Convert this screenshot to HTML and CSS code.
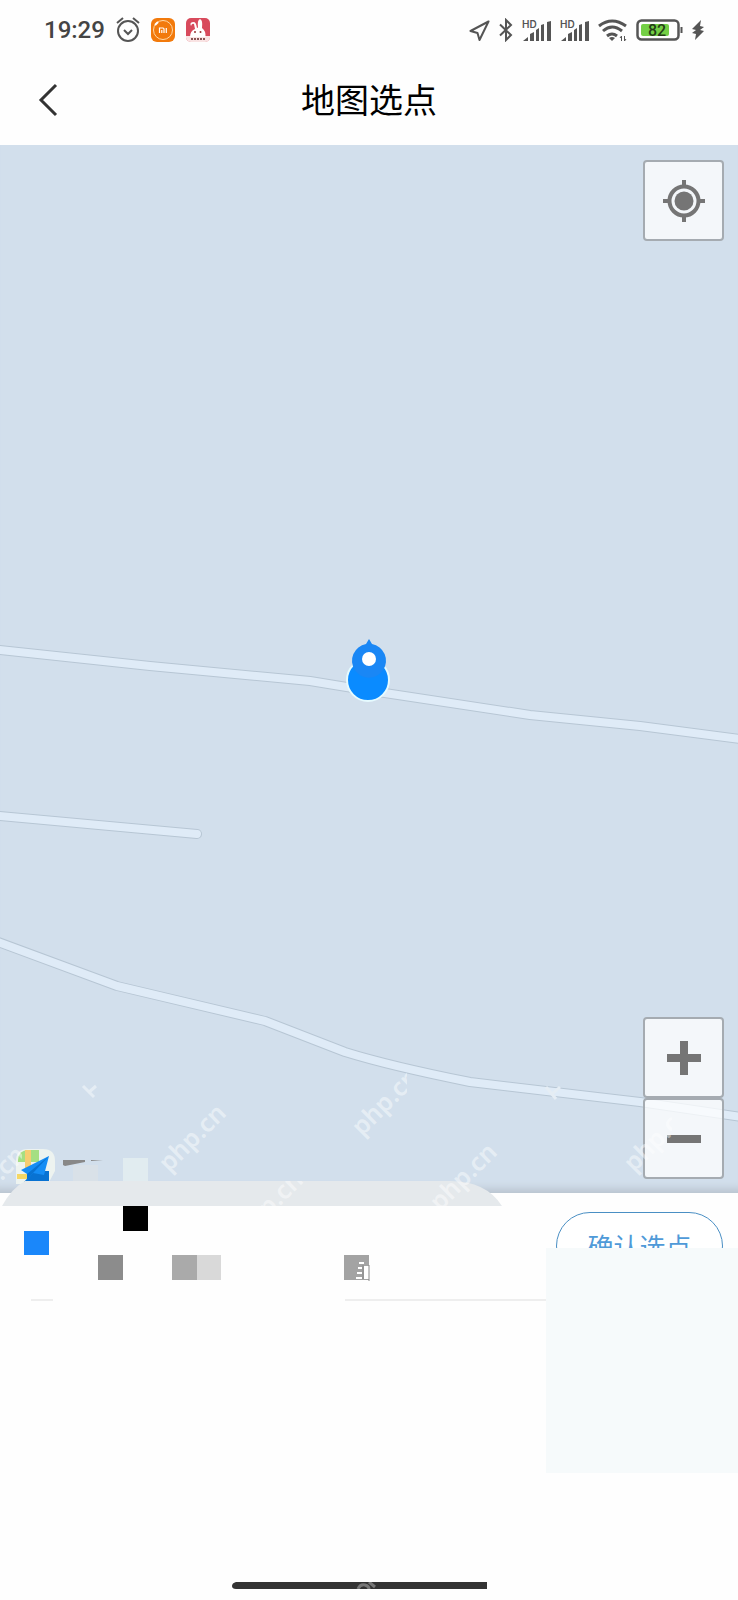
FILE: index.html
```html
<!DOCTYPE html>
<html lang="zh-CN">
<head>
    <meta charset="UTF-8">
    <meta name="viewport" content="width=device-width, initial-scale=1.0">
    <link rel="stylesheet" href="styles.css">
    <title>地图选点</title>
</head>
<body>
    <!-- Status bar -->
    <div class="status">
        <div class="status-left">
            <span class="time">19:29</span>
            <svg width="24" height="26" viewBox="0 0 24 26" fill="none" stroke="#555" stroke-width="2">
                <circle cx="12" cy="14" r="10"/>
                <path d="M8 13l4 4 4-4M1 6l6-5M23 6l-6-5"/>
            </svg>
            <svg width="24" height="24" viewBox="0 0 24 24">
                <rect width="24" height="24" rx="6" fill="#f27a0c"/>
                <circle cx="12" cy="12" r="9.5" fill="none" stroke="#ffd9a8"/>
                <path d="M4 7l3-3" stroke="#fff" stroke-width="2"/>
                <path d="M8.500 15v-5h3.500q1 0 1 1v4M10.800 12v3M15.300 10v5" fill="none" stroke="#fff" stroke-width="1.200"/>
            </svg>
            <svg width="24" height="24" viewBox="0 0 24 24">
                <rect width="24" height="24" rx="5" fill="#d84a5c"/>
                <path d="M0 18h24v2q-1 4-5 4H5q-4 0-5-4z" fill="#f9e3e3"/>
                <path d="M4 19q0-6 5-8L8 6Q6 5 5 8q-2-4 3-4 2 0 3 6l1-.5Q11 2 14 1q3 1 2 9 4 3 3.500 9z" fill="#fff"/>
                <circle cx="9" cy="14" r="1" fill="#933"/>
                <circle cx="14.500" cy="14" r="1" fill="#933"/>
                <path d="M5 21h14" stroke="#855" stroke-width="2" stroke-dasharray="2 1"/>
            </svg>
        </div>
        <div class="status-right">
            <svg width="21" height="21" viewBox="0 0 21 21" fill="none" stroke="#555" stroke-width="2" stroke-linejoin="round">
                <path d="M19.500 1.500L1.500 11l7 2 2 7z"/>
            </svg>
            <svg width="14" height="24" viewBox="0 0 14 24" fill="none" stroke="#555" stroke-width="2">
                <path d="M1 6.500l11 10.500-5 5V2l5 5L1 17.500"/>
            </svg>
            <svg width="29" height="24" viewBox="0 0 29 24" fill="#555">
                <text x="0" y="10" class="hd">HD</text>
                <path d="M1 23l5-4v4zM8 16l4-2v9H8zM14 12l3-2v13h-3zM19 7l3-1v17h-3zM25 4l4-1v20h-4z"/>
            </svg>
            <svg width="29" height="24" viewBox="0 0 29 24" fill="#555">
                <text x="0" y="10" class="hd">HD</text>
                <path d="M1 23l5-4v4zM8 16l4-2v9H8zM14 12l3-2v13h-3zM19 7l3-1v17h-3zM25 4l4-1v20h-4z"/>
            </svg>
            <svg width="29" height="24" viewBox="0 0 29 24" fill="none" stroke="#555" stroke-width="3">
                <path d="M1 8Q14-2 28 8M5 13q9-8 19 0M9 18q5-4 10 0"/>
                <path d="M11 20q3-2 6 0l-3 3z" fill="#555" stroke="none"/>
                <path d="M23.500 23v-5l-1.500 2M26.500 18v5l1.500-2" stroke-width="1"/>
            </svg>
            <svg width="47" height="22" viewBox="0 0 47 22">
                <rect x="1.500" y="1.500" width="41" height="19" rx="4" fill="none" stroke="#555" stroke-width="2.500"/>
                <rect x="5" y="5" width="28" height="12" rx="2" fill="#74cf45"/>
                <text x="12" y="17" class="level">82</text>
                <path d="M45.500 8v6" stroke="#555" stroke-width="2"/>
            </svg>
            <svg width="12" height="22" viewBox="0 0 12 22" fill="#555">
                <path d="M9 1L0 10l4 1-4 3 4 1-1 6 9-9-4-1 4-3-4-1z"/>
            </svg>
        </div>
    </div>

    <header class="header">
        <button class="back" aria-label="返回">
            <svg width="20" height="34" viewBox="0 0 20 34" fill="none" stroke="#333" stroke-width="3">
                <path d="M18 2L3 17l15 15"/>
            </svg>
        </button>
        <h1>地图选点</h1>
    </header>

    <!-- Map with roads, watermark and the selected point -->
    <main class="map">
        <svg class="roads" viewBox="0 0 738 1048" preserveAspectRatio="xMidYMax slice">
            <g class="road-edge">
                <path d="M-10 504L150 521 310 536 365 545 530 570 640 581 748 595"/>
                <path d="M-10 670L197 689"/>
                <path d="M-10 794L117 841 265 876 345 907Q390 921 470 937L640 957 748 973"/>
            </g>
            <g class="road">
                <path d="M-10 504L150 521 310 536 365 545 530 570 640 581 748 595"/>
                <path d="M-10 670L197 689"/>
                <path d="M-10 794L117 841 265 876 345 907Q390 921 470 937L640 957 748 973"/>
            </g>
            <g class="pin">
                <circle cx="368" cy="535" r="21" fill="#0a8bff" stroke="#e6fbff" stroke-width="2"/>
                <path d="M369 494l3 5a17 17 0 1 1-6 0z"/>
                <circle cx="369" cy="514" r="7" fill="#fff"/>
            </g>
        </svg>
        <svg class="provider" width="150" height="36" viewBox="0 0 150 36">
            <path d="M0 36V13Q0 1 12 1h15q12 0 12 12v10l-7 13z" fill="#edf3f0"/>
            <path d="M2 12q1-10 10-10h11v12H2z" fill="#a5df82"/>
            <path d="M9 2h6v21H9z" fill="#f6cd72"/>
            <path d="M1 26h11v5H1z" fill="#f5d765"/>
            <path d="M8 34l10-11h15v11z" fill="#0872d2"/>
            <path d="M33 8L5 22l6 4v6l6-7 11 2z" fill="#158df5"/>
            <path d="M33 8L11 26v6l6-7z" fill="#0872d2"/>
            <path d="M57 17h25v19H57z" fill="#d9e1e8"/>
            <path d="M47 12h22v2l-20 4-2-1zM75 12h12l-12 1z" fill="#888"/>
            <path d="M107 10h25v26h-25z" fill="#e1ecf0"/>
        </svg>
        <button class="tool locate" aria-label="定位">
            <svg width="42" height="42" viewBox="0 0 42 42" fill="none" stroke="#757575" stroke-width="4">
                <circle cx="21" cy="21" r="14.500"/>
                <circle cx="21" cy="21" r="9.500" fill="#757575" stroke="none"/>
                <path d="M21 0v7M21 35v7M0 21h7M35 21h7"/>
            </svg>
        </button>
        <div class="zoom">
            <button class="tool" aria-label="放大">
                <svg width="34" height="34" viewBox="0 0 34 34" stroke="#757575" stroke-width="8"><path d="M17 0v34M0 17h34"/></svg>
            </button>
            <button class="tool" aria-label="缩小">
                <svg width="34" height="34" viewBox="0 0 34 34" stroke="#757575" stroke-width="8"><path d="M0 17h34"/></svg>
            </button>
        </div>
        <svg class="marks" viewBox="0 0 738 100" preserveAspectRatio="xMidYMax meet">
            <defs>
                <clipPath id="cutRight"><path d="M340-50h67v120h-67z"/></clipPath>
                <clipPath id="cutCorner"><path d="M0 40h22v60H0z"/></clipPath>
                <clipPath id="cutZoom"><path d="M610 0h62v90h-62z"/></clipPath>
            </defs>
            <text class="mark" transform="translate(169 80) rotate(-45)">php.cn</text>
            <g clip-path="url(#cutRight)"><text class="mark" transform="translate(362 44) rotate(-45)">php.cn</text></g>
            <g clip-path="url(#cutCorner)"><text class="mark" transform="translate(-32 122) rotate(-45)">php.cn</text></g>
            <g clip-path="url(#cutZoom)"><text class="mark" transform="translate(634 80) rotate(-45)">php.cn</text></g>
            <path class="tick" d="M83-7l11 11M88 0l8-7M546-6l10 12M551 2l9-8"/>
        </svg>
    </main>

    <!-- Bottom sheet -->
    <section class="sheet">
        <svg class="handle" width="505" height="25" viewBox="0 0 505 25">
            <defs>
                <clipPath id="cutHandle"><path d="M0 0h505v25H0z"/></clipPath>
            </defs>
            <path d="M2 25Q12 7 25 0h425q36 0 52 25z" fill="#e5e9ec"/>
            <g clip-path="url(#cutHandle)"><text class="mark" transform="translate(246 59) rotate(-45)">php.cn</text></g>
            <text class="mark" transform="translate(440 31) rotate(-45)">php.cn</text>
        </svg>
        <div class="place">
            <svg width="546" height="96" viewBox="0 0 546 96">
                <path d="M123 0h25v25h-25z"/>
                <path d="M24 25h25v24H24z" fill="#1a87fa"/>
                <path d="M98 49h25v25H98z" fill="#8c8c8c"/>
                <path d="M172 49h25v25h-25z" fill="#aaa"/>
                <path d="M197 49h24v25h-24z" fill="#d9d9d9"/>
                <path d="M344 49h25v25h-25z" fill="#a3a3a3"/>
                <path d="M359 57h5M358 62h4M357 67h5M356 72h6M365 61h3v11h-3z" fill="#fff" stroke="#fff" stroke-width="2"/>
                <path d="M363 59v14M369 59v16" stroke="#888"/>
                <path d="M31 94h22M345 94h201" stroke="#eee" stroke-width="2"/>
            </svg>
        </div>
        <button class="confirm">确认选点</button>
        <div class="cover"></div>
    </section>

    <footer class="home">
        <svg width="255" height="7" viewBox="0 0 255 7">
            <path d="M4 0h251v7H4Q0 7 0 4t4-4z" fill="#333"/>
            <path d="M126 7q2-5 7-4 4 1 4 4M137 0l6 5" fill="none" stroke="#777" stroke-width="3"/>
        </svg>
    </footer>
</body>
</html>
```

FILE: styles.css
```css
* {
    box-sizing: border-box;
}
body {
    margin: 0;
    min-height: 100vh;
    display: flex;
    flex-direction: column;
    background-color: #fefefe;
    font-family: "Noto Sans", "Noto Sans CJK SC", sans-serif;
}
button {
    padding: 0;
    cursor: pointer;
    font-family: inherit;
}
svg {
    display: block;
}

/* Status bar */
.status {
    display: flex;
    justify-content: space-between;
    align-items: center;
    height: 60px;
    padding: 0 34px 0 44px;
}
.status-left, .status-right {
    display: flex;
    align-items: center;
}
.status-left {
    gap: 11px;
}
.status-right {
    gap: 9px;
}
.time {
    font-family: Roboto, sans-serif;
    font-size: 24px;
    font-weight: 500;
    color: #444;
}
.hd {
    font: 600 10px Inter, sans-serif;
}
.level {
    font: 500 16px Roboto, sans-serif;
    fill: #253d18;
}

/* Title */
.header {
    display: grid;
    grid-template-columns: 58px 1fr 58px;
    align-items: center;
    height: 85px;
    padding-bottom: 5px;
}
.back {
    display: flex;
    justify-content: flex-end;
    border: none;
    background: none;
}
.header h1 {
    margin: 0;
    text-align: center;
    font-size: 34px;
    line-height: 40px;
    font-weight: 400;
    color: #000;
}

/* Map */
.map {
    position: relative;
    flex: 1;
    overflow: hidden;
    background-color: #d2dfec;
    box-shadow: inset 0 -12px 8px -8px #b8c2cd;
}
.roads {
    position: absolute;
    width: 100%;
    height: 100%;
}
.road, .road-edge {
    fill: none;
    stroke-linecap: round;
    stroke-linejoin: round;
}
.road-edge {
    stroke: #b7c6d4;
    stroke-width: 10px;
}
.road {
    stroke: #dfebf7;
    stroke-width: 8px;
}
.pin {
    fill: #1a87f5;
}
.tool {
    display: flex;
    justify-content: center;
    align-items: center;
    width: 81px;
    height: 81px;
    border: 2px solid #a5abb1;
    border-radius: 4px;
    background-color: rgba(255, 255, 255, 0.75);
}
.locate {
    position: absolute;
    top: 15px;
    right: 14px;
}
.zoom {
    position: absolute;
    right: 14px;
    bottom: 14px;
}
.provider {
    position: absolute;
    left: 16px;
    bottom: 9px;
}
.marks {
    position: absolute;
    left: 0;
    bottom: 0;
    width: 100%;
    overflow: visible;
    pointer-events: none;
}
.mark {
    font: 600 25px "Noto Sans", sans-serif;
    fill: rgba(255, 255, 255, 0.45);
}
.tick {
    fill: none;
    stroke: #e5edf4;
    stroke-width: 3px;
}

/* Bottom sheet */
.sheet {
    position: relative;
    display: flex;
    justify-content: space-between;
    align-items: flex-start;
    height: 280px;
    padding: 19px 15px 0 0;
}
.handle {
    position: absolute;
    left: 0;
    top: -12px;
    overflow: visible;
}
.place {
    flex: 1;
    min-width: 0;
    overflow: hidden;
    margin-top: -6px;
}
.confirm {
    width: 167px;
    height: 68px;
    border: 1px solid #4a8fc4;
    border-radius: 34px;
    background-color: #fff;
    font-size: 26px;
    color: #4f9ad8;
}
.cover {
    position: absolute;
    right: 0;
    top: 55px;
    width: 192px;
    height: 225px;
    background-color: #f6fafb;
}

.home {
    display: flex;
    justify-content: center;
    align-items: flex-end;
    height: 127px;
    padding: 0 20px 11px 0;
}
```
